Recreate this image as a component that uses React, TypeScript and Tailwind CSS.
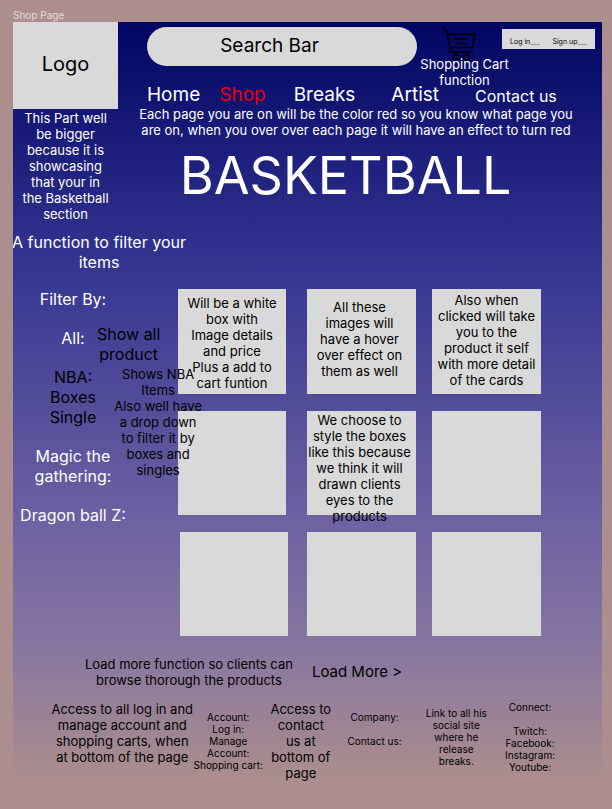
import React from "react";

const navLinks = [
  { label: "Home", style: "text-[19px]" },
  { label: "Shop", style: "text-[19px] text-[#e80000] ml-[19px]" },
  { label: "Breaks", style: "text-[19px] ml-7" },
  { label: "Artist", style: "text-[19px] ml-9" },
  { label: "Contact us", style: "text-base leading-6 ml-9 pt-px" },
];

const products: { lines: string[]; style: string }[] = [
  {
    lines: ["Will be a white", "box with", "Image details", "and price", "Plus a add to", "cart funtion"],
    style: "mr-[5px] pt-1.5",
  },
  { lines: ["All these", "images will", "have a hover", "over effect on", "them as well"], style: "pt-2.5 pr-1" },
  {
    lines: ["Also when", "clicked will take", "you to the", "product it self", "with more detail", "of the cards"],
    style: "pt-[3px]",
  },
  { lines: [], style: "mr-[5px]" },
  {
    lines: ["We choose to", "style the boxes", "like this because", "we think it will", "drawn clients", "eyes to the", "products"],
    style: "pt-px pr-1",
  },
  { lines: [], style: "" },
  { lines: [], style: "ml-0.5 mr-[3px]" },
  { lines: [], style: "" },
  { lines: [], style: "" },
];

function Lines({ lines }: { lines: string[] }) {
  return (
    <>
      {lines.map((line, i) => (
        <span key={i} className="block whitespace-nowrap">
          {line || "\u00a0"}
        </span>
      ))}
    </>
  );
}

function CartIcon() {
  return (
    <svg viewBox="0 0 34 33" className="h-[33px] w-[34px]" fill="none" stroke="#000" strokeWidth="1.7" aria-hidden="true">
      <path d="M0.3 0.8 L4.6 2.8 L8.2 19.5 L7.6 24 H31" />
      <path d="M5.5 6.4 H32.6 L30.6 19.5 H8.2" />
      <path d="M12 11 H26 M13 15.5 H25" />
      <circle cx="14" cy="29.3" r="2.7" />
      <circle cx="24.8" cy="29.3" r="2.7" />
    </svg>
  );
}

function Header() {
  return (
    <header className="flex">
      <div className="w-[105px] shrink-0">
        <a href="#" className="flex h-[87px] items-center justify-center bg-[#d9d9d9] pb-1 text-xl text-black">
          Logo
        </a>
        <p className="pt-px text-center text-[13px] leading-4">
          <Lines
            lines={["This Part well", "be bigger", "because it is", "showcasing", "that your in", "the Basketball", "section"]}
          />
        </p>
      </div>
      <div className="min-w-0 flex-1 pl-[29px]">
        <div className="flex pr-[7px] pt-[5px]">
          <input
            type="search"
            aria-label="Search Bar"
            placeholder="Search Bar"
            className="h-[39px] min-w-0 flex-1 rounded-full bg-[#d9d9d9] pb-[3px] pr-2 text-center text-[19px] text-black placeholder:text-black"
          />
          <a href="#" className="flex w-[95px] shrink-0 flex-col items-center pt-px text-center text-[13px] leading-4">
            <span className="pr-3">
              <CartIcon />
            </span>
            <span className="-mt-[5px]">
              <Lines lines={["Shopping Cart", "function"]} />
            </span>
          </a>
          <div className="-ml-2.5 mt-0.5 flex h-5 w-[93px] shrink-0 items-center justify-between bg-[#d9d9d9] px-2 pt-1.5 text-[7px] text-black">
            <button type="button">
              Log in<span className="text-neutral-500">___</span>
            </button>
            <button type="button">
              Sign up<span className="text-neutral-500">___</span>
            </button>
          </div>
        </div>
        <nav className="-mt-[5px] flex whitespace-nowrap leading-[23px]">
          {navLinks.map((link) => (
            <a key={link.label} href="#" className={link.style}>
              {link.label}
            </a>
          ))}
        </nav>
        <p className="-ml-[9px] -mt-0.5 mr-7 text-center text-[13px] leading-4">
          <Lines
            lines={[
              "Each page you are on will be the color red so you know what page you",
              "are on, when you over over each page it will have an effect to turn red",
            ]}
          />
        </p>
        <h1 className="mr-[58px] mt-1.5 text-center text-[52px] leading-[64px]">BASKETBALL</h1>
      </div>
    </header>
  );
}

function Filters() {
  return (
    <aside className="relative z-10 flex w-[165px] shrink-0 text-center text-base leading-5">
      <div className="flex w-[120px] shrink-0 flex-col items-center gap-[19px]">
        <h2>Filter By:</h2>
        <button type="button">All:</button>
        <div className="flex flex-col text-black">
          <button type="button">NBA:</button>
          <button type="button">Boxes</button>
          <button type="button">Single</button>
        </div>
        <button type="button">
          <Lines lines={["Magic the", "gathering:"]} />
        </button>
        <button type="button" className="whitespace-nowrap">
          Dragon ball Z:
        </button>
      </div>
      <div className="-ml-9 flex w-[105px] shrink-0 flex-col gap-0.5 pt-[35px] text-black">
        <p className="self-start">
          <Lines lines={["Show all", "product"]} />
        </p>
        <p className="self-end text-[13px] leading-4">
          <Lines
            lines={["Shows NBA", "Items", "Also well have", "a drop down", "to filter it by", "boxes and", "singles"]}
          />
        </p>
      </div>
    </aside>
  );
}

function ProductGrid() {
  return (
    <section className="grid flex-1 grid-rows-[105px_104px_104px] grid-cols-[113fr_109fr_109fr] gap-x-4 gap-y-[17px] text-center text-[13px] leading-4 text-black">
      {products.map((product, i) => (
        <article key={i} className={`bg-[#d9d9d9] ${product.style}`}>
          <Lines lines={product.lines} />
        </article>
      ))}
    </section>
  );
}

function Footer() {
  return (
    <footer className="mt-[13px] grid grid-cols-[143fr_68fr_76fr_72fr_92fr_56fr] pl-[38px] pr-11 text-center text-[10px] leading-3 text-black">
      <p className="text-[13px] leading-4">
        <Lines
          lines={["Access to all log in and", "manage account and", "shopping carts, when", "at bottom of the page"]}
        />
      </p>
      <div className="pt-2.5">
        <Lines lines={["Account:", "Log in:", "Manage", "Account:", "Shopping cart:"]} />
      </div>
      <p className="text-[13px] leading-4">
        <Lines lines={["Access to", "contact", "us at", "bottom of", "page"]} />
      </p>
      <div className="pt-2.5">
        <Lines lines={["Company:", "", "Contact us:"]} />
      </div>
      <p className="pt-1.5">
        <Lines lines={["Link to all his", "social site", "where he", "release", "breaks."]} />
      </p>
      <div>
        <Lines lines={["Connect:", "", "Twitch:", "Facebook:", "Instagram:", "Youtube:"]} />
      </div>
    </footer>
  );
}

export default function App() {
  return (
    <div className="min-h-screen bg-[#ab8e8d] pb-3 pl-[13px] pr-2.5 pt-2 font-['Inter',sans-serif] text-white">
      <p className="text-[10px] leading-[14px] text-[#e6dcdc]">Shop Page</p>
      <main className="overflow-hidden bg-[linear-gradient(to_bottom,#000563_0%,#383993_34%,#6e62a2_65%,#8876a0_81%,#ab8e8d_98%)] pb-3.5">
        <Header />
        <p className="-ml-2 mt-2.5 w-[188px] text-center text-base leading-5">
          <Lines lines={["A function to filter your", "items"]} />
        </p>
        <div className="mt-[17px] flex pr-[61px]">
          <Filters />
          <ProductGrid />
        </div>
        <div className="mt-5 flex items-center pl-[72px] text-black">
          <p className="text-center text-[13px] leading-4">
            <Lines lines={["Load more function so clients can", "browse thorough the products"]} />
          </p>
          <button type="button" className="ml-[19px] text-[15px] leading-5">
            Load More &gt;
          </button>
        </div>
        <Footer />
      </main>
    </div>
  );
}
